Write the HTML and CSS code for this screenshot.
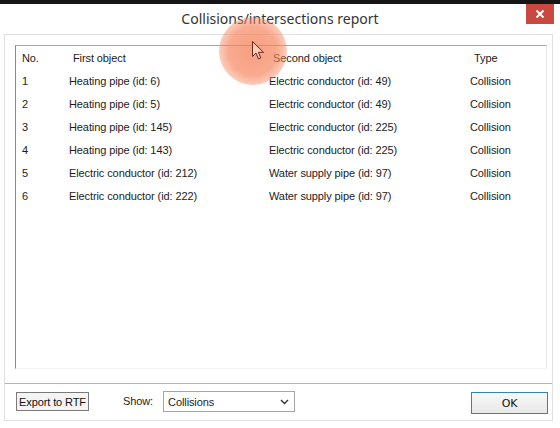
FILE: index.html
```html
<!DOCTYPE html>
<html>
<head>
<meta charset="utf-8">
<link rel="stylesheet" href="styles.css">
</head>
<body>
<div class="topstrip"></div>
<div class="titlebar">
  <div></div>
  <div class="title">Collisions/intersections report</div>
  <div class="closecell"><div class="close"><svg width="10" height="10" viewBox="0 0 10 10"><path d="M1.5 1.5 L8.5 8.5 M8.5 1.5 L1.5 8.5" stroke="#fff" stroke-width="2"/></svg></div></div>
</div>
<div class="dialog">
  <div class="listwrap">
    <div class="list">
      <div class="row head"><div>No.</div><div>First object</div><div>Second object</div><div>Type</div></div>
      <div class="row"><div>1</div><div>Heating pipe (id: 6)</div><div>Electric conductor (id: 49)</div><div>Collision</div></div>
      <div class="row"><div>2</div><div>Heating pipe (id: 5)</div><div>Electric conductor (id: 49)</div><div>Collision</div></div>
      <div class="row"><div>3</div><div>Heating pipe (id: 145)</div><div>Electric conductor (id: 225)</div><div>Collision</div></div>
      <div class="row"><div>4</div><div>Heating pipe (id: 143)</div><div>Electric conductor (id: 225)</div><div>Collision</div></div>
      <div class="row"><div>5</div><div>Electric conductor (id: 212)</div><div>Water supply pipe (id: 97)</div><div>Collision</div></div>
      <div class="row"><div>6</div><div>Electric conductor (id: 222)</div><div>Water supply pipe (id: 97)</div><div>Collision</div></div>
    </div>
  </div>
  <div class="footer">
    <div class="btn export">Export to RTF</div>
    <div class="showlabel">Show:</div>
    <div class="select"><span>Collisions</span><svg width="9" height="6" viewBox="0 0 9 6"><path d="M1 1 L4.5 4.5 L8 1" fill="none" stroke="#333" stroke-width="1.4"/></svg></div>
    <div class="spacer"></div>
    <div class="btn ok">OK</div>
  </div>
</div>
<div class="clickhl"></div>
<svg class="cursor" width="13" height="20" viewBox="0 0 13 20"><path d="M0.5 0.5 L0.5 15.5 L4 12 L6.5 18 L8.8 17 L6.4 11.3 L11.5 11.3 Z" fill="rgba(255,235,225,0.6)" stroke="#6a2a1e" stroke-width="1"/></svg>
</body>
</html>
```
FILE: styles.css
```css
* { box-sizing: border-box; }
html, body { margin: 0; padding: 0; }
body {
  width: 560px;
  height: 428px;
  background: #fff;
  font-family: "Liberation Sans", Arial, sans-serif;
  font-size: 11px;
  letter-spacing: -0.1px;
  color: #1c1c1c;
  overflow: hidden;
  position: relative;
}
.topstrip {
  height: 4px;
  background: #151515;
}
.titlebar {
  height: 30px;
  display: grid;
  grid-template-columns: 1fr auto 1fr;
  align-items: start;
}
.title {
  font-family: "Noto Sans", "Open Sans", sans-serif;
  font-size: 14px;
  letter-spacing: 0;
  color: #333;
  padding-top: 5px;
  line-height: 20px;
}
.closecell {
  display: flex;
  justify-content: flex-end;
  padding-right: 6px;
}
.close {
  width: 28px;
  height: 20px;
  background: #c9483f;
  display: flex;
  align-items: center;
  justify-content: center;
}
.dialog {
  margin: 0 7px 0 4px;
  height: 387px;
  border: 1px solid #e0e0e0;
  display: flex;
  flex-direction: column;
}
.listwrap {
  padding: 10px 5px 0 10px;
  flex: 1;
  display: flex;
  flex-direction: column;
}
.list {
  height: 324px;
  padding-top: 1px;
  border-top: 1px solid #a8a8a8;
  border-left: 1px solid #8a8a8a;
  border-right: 1px solid #e8e8e8;
  border-bottom: 1px solid #f2f2f2;
}
.row {
  display: grid;
  grid-template-columns: 48px 200px 201px 1fr;
  height: 23px;
  align-items: center;
}
.row:first-child { height: 22px; }
.row > div { padding-left: 5px; white-space: nowrap; }
.row > div:first-child { padding-left: 6px; }
.row.head > div { padding-left: 9px; }
.row.head > div:first-child { padding-left: 6px; }
.footer {
  height: 37px;
  border-top: 1px solid #b4b4b4;
  display: flex;
  align-items: flex-start;
  padding: 7px 4px 0 11px;
}
.btn {
  display: flex;
  align-items: center;
  justify-content: center;
  font-size: 11px;
  color: #111;
}
.export {
  width: 73px;
  height: 19px;
  margin-top: 1px;
  border: 1px solid #7a7a7a;
  background: #f4f4f4;
}
.showlabel {
  margin-left: 34px;
  line-height: 21px;
}
.select {
  margin-left: 10px;
  width: 132px;
  height: 21px;
  border: 1px solid #a6a6a6;
  background: #fff;
  display: flex;
  align-items: center;
  justify-content: space-between;
  padding: 0 5px 0 4px;
}
.spacer { flex: 1; }
.ok {
  width: 77px;
  height: 22px;
  margin-top: 1px;
  border: 1px solid #3c7fb1;
  background: linear-gradient(#f8f8f8, #e8e8e8);
  font-family: "DejaVu Sans", sans-serif;
  font-size: 11px;
}
.clickhl {
  position: absolute;
  left: 219px;
  top: 17px;
  width: 68px;
  height: 68px;
  border-radius: 50%;
  background: radial-gradient(circle, rgba(245,125,85,0.75) 0%, rgba(245,130,90,0.68) 50%, rgba(246,140,100,0) 100%);
  pointer-events: none;
}
.cursor {
  position: absolute;
  left: 252px;
  top: 41px;
}
```
